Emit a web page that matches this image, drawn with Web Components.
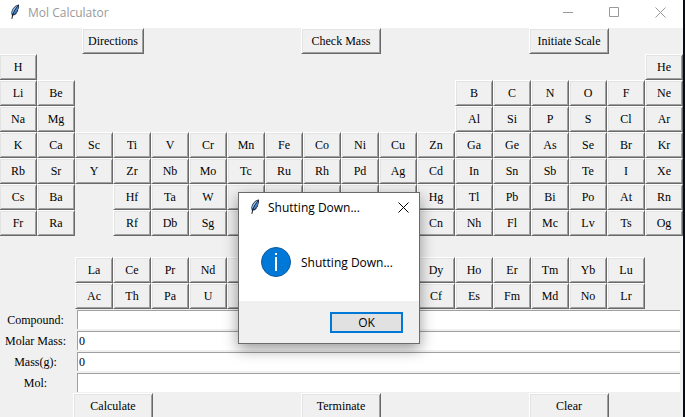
<!DOCTYPE html>
<html lang="en">
<head>
<meta charset="utf-8">
<title>Mol Calculator</title>
<style>
html, body { height: 100%; margin: 0; }
body { overflow: hidden; background: #090c18; }
</style>
</head>
<body>
<mol-calculator></mol-calculator>
<script>
const define = (name, html, setup) => {
  const template = document.createElement('template');
  template.innerHTML = html;
  customElements.define(name, class extends HTMLElement {
    constructor() {
      super();
      this.attachShadow({ mode: 'open' }).append(template.content.cloneNode(true));
    }
    connectedCallback() {
      if (setup && !this.ready) { this.ready = true; setup(this, this.shadowRoot); }
    }
  });
};

define('feather-icon', `
<style>
:host { display: block; width: 12px; height: 16px; }
svg { display: block; }
</style>
<svg width="12" height="16" viewBox="0 0 12 16" aria-hidden="true">
  <path d="M9.800.6C7 .7 3.600 4 2.600 7.300c-.5 1.900-.1 3.200.4 4.100L2.400 15l1-.2.700-3.200c1.500-.3 3-1 3.800-2.600l-.7-.1 1.400-.9.700-2.200-.4-.1.600-.8c.5-1.400.9-3.600.3-4.500z" fill="#16202f"/>
  <path d="M9 1.300C6.500 2 3.900 5 3.300 7.500c-.3 1.200-.1 2 .2 2.600C4.600 7 6.600 4 9 1.300z" fill="#8fc3f7"/>
  <path d="M9.300 2C7 4.800 5.100 7.600 4.400 10.500c1-.3 1.800-.8 2.300-1.600l.2-1 1.100-.5.600-2C9.200 4.400 9.500 3.200 9.300 2z" fill="#4a86d2"/>
</svg>`);

define('tk-button', `
<style>
:host { display: block; min-width: 0; }
button {
  display: block; box-sizing: border-box; width: 100%; height: 26px; margin: 0; padding: 0;
  font: inherit; line-height: 20px; color: #000; background: #f0f0f0; white-space: nowrap;
  border: 1px solid; border-color: #fff #696969 #696969 #fff; border-radius: 0;
  box-shadow: inset 1px 1px #e3e3e3, inset -1px -1px #a0a0a0;
}
</style>
<button type="button"><slot></slot></button>`);

define('button-row', `
<style>
:host { display: grid; grid-template-columns: repeat(3, 1fr); justify-items: center; }
::slotted(tk-button) { width: 80px; }
::slotted(tk-button.narrow) { width: 62px; }
</style>
<slot></slot>`);

define('periodic-table', `
<style>
:host {
  display: grid;
  grid-template-columns: repeat(18, minmax(0, 1fr));
  grid-template-rows: repeat(7, 26px) 21px repeat(2, 26px);
}
</style>`, (host, root) => {
  const rows = [
    [1, 1, 'H'], [1, 18, 'He'],
    [2, 1, 'Li Be'], [2, 13, 'B C N O F Ne'],
    [3, 1, 'Na Mg'], [3, 13, 'Al Si P S Cl Ar'],
    [4, 1, 'K Ca Sc Ti V Cr Mn Fe Co Ni Cu Zn Ga Ge As Se Br Kr'],
    [5, 1, 'Rb Sr Y Zr Nb Mo Tc Ru Rh Pd Ag Cd In Sn Sb Te I Xe'],
    [6, 1, 'Cs Ba'], [6, 4, 'Hf Ta W Re Os Ir Pt Au Hg Tl Pb Bi Po At Rn'],
    [7, 1, 'Fr Ra'], [7, 4, 'Rf Db Sg Bh Hs Mt Ds Rg Cn Nh Fl Mc Lv Ts Og'],
    [9, 3, 'La Ce Pr Nd Pm Sm Eu Gd Tb Dy Ho Er Tm Yb Lu'],
    [10, 3, 'Ac Th Pa U Np Pu Am Cm Bk Cf Es Fm Md No Lr']
  ];
  for (const [row, start, symbols] of rows) {
    symbols.split(' ').forEach((symbol, i) => {
      const cell = document.createElement('tk-button');
      cell.textContent = symbol;
      cell.style.gridArea = row + ' / ' + (start + i);
      root.append(cell);
    });
  }
});

define('tk-entry', `
<style>
:host { display: grid; grid-template-columns: 76fr 608fr; height: 21px; }
label { text-align: center; line-height: 22px; padding-right: 3px; white-space: nowrap; }
input {
  box-sizing: border-box; min-width: 0; height: 19px; margin: 1px 3px 1px 2px; padding: 0 1px;
  font: inherit; color: #000; background: #fff; outline: none;
  border: 0 solid #a0a0a0; border-width: 1px 0 0 1px; border-radius: 0;
}
</style>
<label for="field"></label><input id="field" type="text">`, (host, root) => {
  root.querySelector('label').textContent = host.getAttribute('label');
  root.querySelector('input').value = host.getAttribute('value') || '';
});

define('title-bar', `
<style>
:host { display: flex; align-items: center; height: 28px; background: #fff; color: #999;
  font: 12px/16px "Open Sans", "Noto Sans", sans-serif; }
feather-icon { margin: 0 7px 4px 9px; }
.title { flex: 1; padding-bottom: 2px; }
button { display: grid; place-items: center; width: 46px; height: 24px; padding: 0; margin: 0 0 4px; border: 0;
  background: none; color: inherit; }
svg { fill: none; stroke: currentColor; }
</style>
<feather-icon></feather-icon>
<span class="title"><slot></slot></span>
<button type="button" aria-label="Minimize"><svg width="11" height="11"><path d="M0 5.500h10"/></svg></button>
<button type="button" aria-label="Maximize"><svg width="11" height="11"><path d="M.5.5h9v9h-9z"/></svg></button>
<button type="button" aria-label="Close"><svg width="11" height="11"><path d="M.5.5l10 10M10.500.5l-10 10"/></svg></button>`);

define('message-box', `
<style>
:host { display: block; box-sizing: border-box; width: 182px; background: #fff; color: #000;
  border: 1px solid #6b6b6b; box-shadow: 0 5px 14px rgba(0, 0, 0, .4);
  font: 12px/16px "Open Sans", "Noto Sans", sans-serif; }
header { display: flex; align-items: center; height: 30px; }
feather-icon { margin: 0 7px 2px 10px; }
.title { flex: 1; }
.close { width: 32px; height: 28px; padding: 0; margin-bottom: 2px; border: 0; background: none; display: grid; place-items: center; }
main { display: flex; align-items: center; gap: 10px; height: 78px; padding-left: 22px; }
.text { padding-top: 2px; }
footer { display: flex; justify-content: flex-end; padding: 11px 16px 10px; background: #f0f0f0; }
.ok { box-sizing: border-box; width: 73px; height: 21px; padding: 0; border: 2px solid #0078d7;
  background: #e1e1e1; color: #000; font: inherit; border-radius: 0; }
svg { display: block; }
</style>
<header>
  <feather-icon></feather-icon>
  <span class="title"><slot name="title"></slot></span>
  <button class="close" type="button" aria-label="Close"><svg width="11" height="11" fill="none" stroke="#000"><path d="M.5.5l10 10M10.500.5l-10 10"/></svg></button>
</header>
<main>
  <svg width="30" height="30" viewBox="0 0 30 30" aria-hidden="true">
    <circle cx="15" cy="15" r="14.500" fill="#0078d7" stroke="#0f5a9c"/>
    <path d="M14 6h2v2h-2zM14 10h2v14h-2z" fill="#fff"/>
  </svg>
  <span class="text"><slot></slot></span>
</main>
<footer><button class="ok" type="button">OK</button></footer>`);

define('mol-calculator', `
<style>
:host { display: block; position: relative; box-sizing: border-box; min-height: 100%; padding-right: 2px;
  font: 12px/20px "Liberation Serif", serif; color: #000; }
.window { background: #f0f0f0; }
.content { margin-left: -1px; }
message-box { position: absolute; left: 238px; top: 192px; }
</style>
<div class="window">
  <title-bar>Mol Calculator</title-bar>
  <div class="content">
    <button-row>
      <tk-button class="narrow">Directions</tk-button>
      <tk-button>Check Mass</tk-button>
      <tk-button>Initiate Scale</tk-button>
    </button-row>
    <periodic-table></periodic-table>
    <tk-entry label="Compound:"></tk-entry>
    <tk-entry label="Molar Mass:" value="0"></tk-entry>
    <tk-entry label="Mass(g):" value="0"></tk-entry>
    <tk-entry label="Mol:"></tk-entry>
    <button-row>
      <tk-button>Calculate</tk-button>
      <tk-button>Terminate</tk-button>
      <tk-button>Clear</tk-button>
    </button-row>
  </div>
</div>
<message-box role="dialog" aria-label="Shutting Down"><span slot="title">Shutting Down...</span>Shutting Down...</message-box>`);
</script>
</body>
</html>
